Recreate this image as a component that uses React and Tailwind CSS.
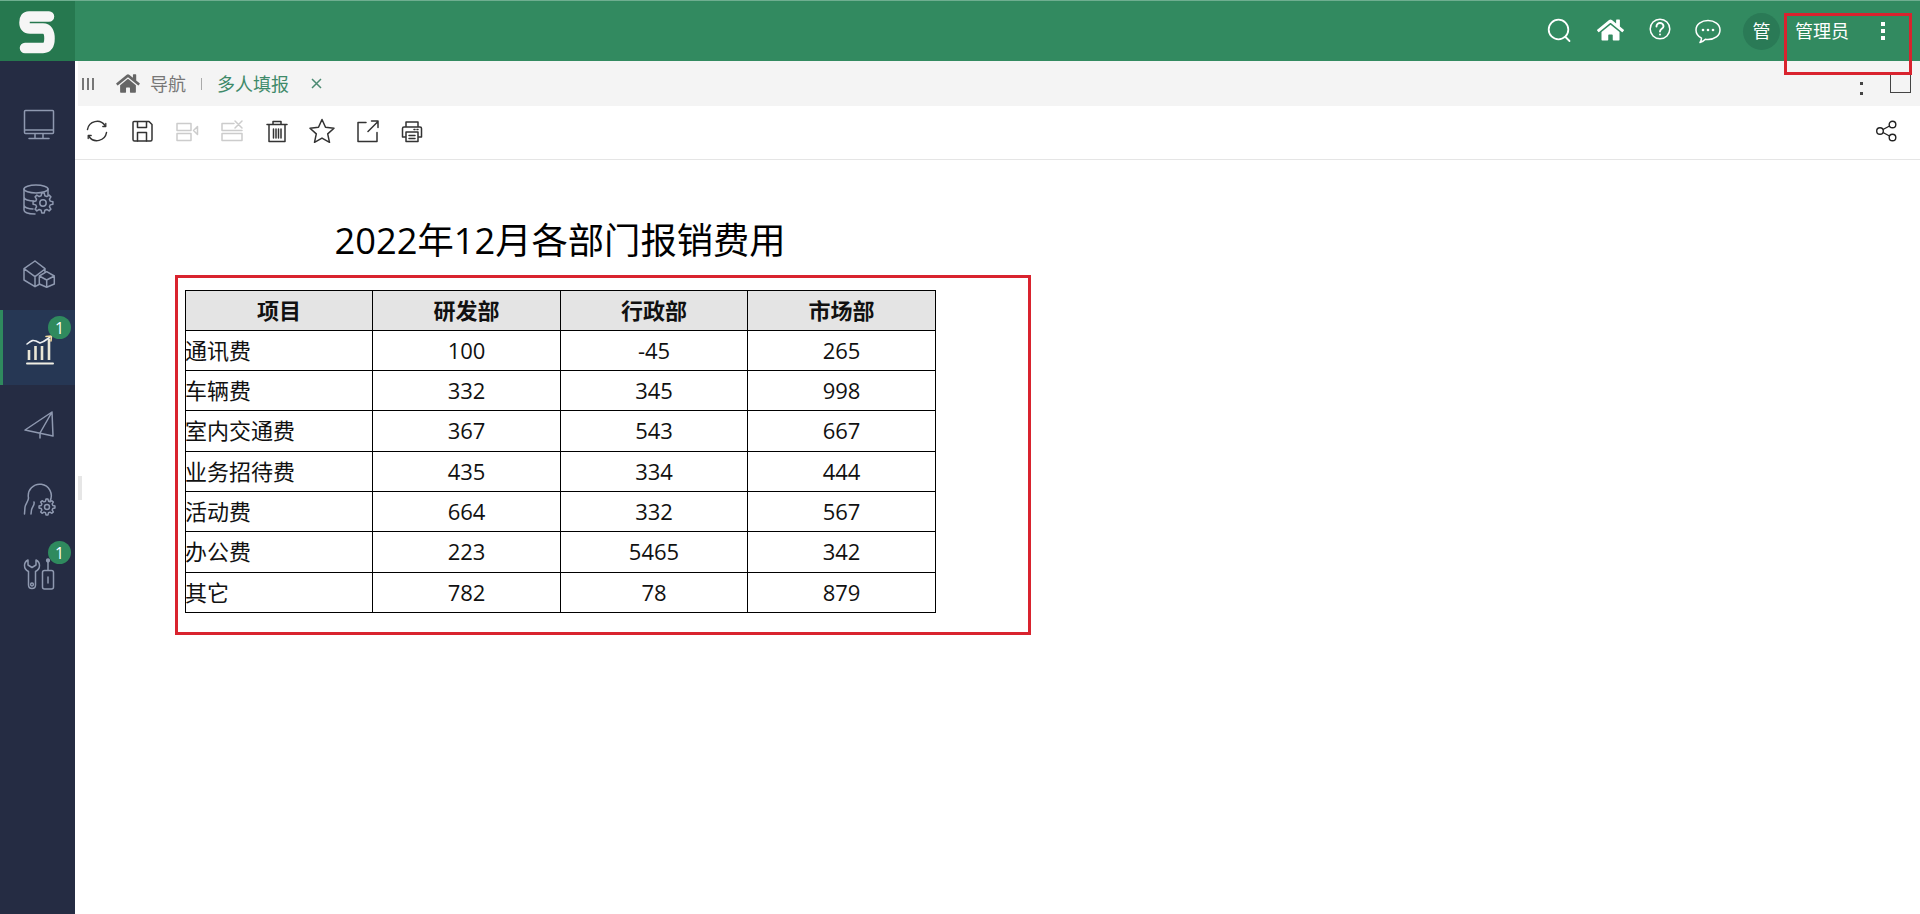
import { FaHome } from "react-icons/fa";

const rows = [
  ["通讯费", "100", "-45", "265", "h-[40px]"],
  ["车辆费", "332", "345", "998", "h-[40px]"],
  ["室内交通费", "367", "543", "667", "h-[41px]"],
  ["业务招待费", "435", "334", "444", "h-[40px]"],
  ["活动费", "664", "332", "567", "h-[40px]"],
  ["办公费", "223", "5465", "342", "h-[41px]"],
  ["其它", "782", "78", "879", "h-[40px]"],
];

// gear outline used by two of the sidebar icons
function gearPath(cx, cy, outer, inner, teeth) {
  let d = "";
  const step = (Math.PI * 2) / teeth;
  for (let i = 0; i < teeth; i++) {
    const a = i * step - Math.PI / 2;
    const pts = [
      [inner, a - step * 0.32],
      [outer, a - step * 0.16],
      [outer, a + step * 0.16],
      [inner, a + step * 0.32],
    ];
    pts.forEach(([r, t], j) => {
      const x = (cx + r * Math.cos(t)).toFixed(2);
      const y = (cy + r * Math.sin(t)).toFixed(2);
      d += `${i === 0 && j === 0 ? "M" : "L"}${x} ${y} `;
    });
  }
  return d + "Z";
}

const side = "#8f99b0";
const bg = "#252c43";

function SideSvg({ children }) {
  return (
    <svg width="41" height="41" viewBox="0 0 41 41" fill="none" stroke={side} strokeWidth="1.500" strokeLinejoin="round" strokeLinecap="round">
      {children}
    </svg>
  );
}

function Monitor() {
  return (
    <SideSvg>
      <rect x="7.500" y="8.500" width="29" height="23" rx="1" />
      <path d="M8 28h28M18 32v4M26 32v4M12 36.500h20" />
    </SideSvg>
  );
}

function DbGear() {
  return (
    <SideSvg>
      <ellipse cx="19" cy="12" rx="12" ry="4" />
      <path d="M7 12v21c0 2.500 5 4 11 4M7 20c0 2.500 5 4 10 4M7 28c0 2.500 5 4 9 4M31 12v6" />
      <path d={gearPath(26, 26, 10, 7.500, 8)} fill={bg} />
      <circle cx="26" cy="26" r="3.200" />
    </SideSvg>
  );
}

function Boxes() {
  return (
    <SideSvg>
      <path d="M18 9L28 16.700V20M18 9L7 16.700V28L18 34.700L22 32.500M7 16.700L18 24.700V34.700M18 24.700L28 17" />
      <path d="M29.700 19.700L37.300 24V32L29.700 35.300L22.300 32V24zM22.300 24L29.700 28L37.300 24M29.700 28V35.300" fill={bg} />
    </SideSvg>
  );
}

function ChartUp() {
  return (
    <svg width="41" height="41" viewBox="0 0 41 41" fill="none" strokeLinecap="round" strokeLinejoin="round">
      <path d="M10 36.500h26" stroke="#f1efe4" strokeWidth="2" />
      <path d="M12 33V23M18.500 33V19M25 33V19M32 33V12" stroke="#e9e6d6" strokeWidth="2.600" strokeLinecap="butt" />
      <path d="M10 17c5-4 6-4 9-3l4 2c4-1 6-3 10-6" stroke="#eef0f2" strokeWidth="1.600" />
      <path d="M29 9.500l5.500-.5-.5 5" stroke="#f2d9a0" strokeWidth="1.600" />
    </svg>
  );
}

function Plane() {
  return (
    <SideSvg>
      <path d="M35 10L8 28l28 6zM35 10L23 31v5" />
    </SideSvg>
  );
}

function PersonGear() {
  return (
    <SideSvg>
      <path d="M33 24A11.500 11.500 0 1 0 11.500 21c0 3-3 6-3.500 9l-.5 7" />
      <path d="M17 25c1 3-2 5-2.500 8l-.5 4" />
      <path d={gearPath(30, 30, 8, 6, 8)} fill={bg} />
      <circle cx="30" cy="30" r="2.500" />
    </SideSvg>
  );
}

function Tools() {
  return (
    <SideSvg>
      <path d="M11 8c-2 1-3.500 3-3.500 5.500 0 3 2 5 4 6V33c0 2 1.500 3.500 3.500 3.500s3.500-1.500 3.500-3.500V19.500c2-1 4-3 4-6C22.500 11 21 9 19 8v5l-4 2.500L11 13z" />
      <circle cx="15" cy="32.500" r="1.400" />
      <path d="M31 9v9M25.500 20.500c0-1 1-2 2-2h7c1 0 2 1 2 2V35c0 1-1 2-2 2h-7c-1 0-2-1-2-2zM31 25v6" />
      <circle cx="31" cy="8.500" r="1.400" fill={side} />
    </SideSvg>
  );
}

const sideItems = [
  { icon: <Monitor /> },
  { icon: <DbGear /> },
  { icon: <Boxes /> },
  { icon: <ChartUp />, active: true, badge: "1" },
  { icon: <Plane /> },
  { icon: <PersonGear /> },
  { icon: <Tools />, badge: "1" },
];

function ToolSvg({ children, color = "#333333" }) {
  return (
    <svg width="24" height="24" viewBox="0 0 24 24" fill="none" stroke={color} strokeWidth="1.500" strokeLinejoin="round" strokeLinecap="round">
      {children}
    </svg>
  );
}

export default function App() {
  return (
    <div className="flex flex-col h-screen bg-white overflow-hidden font-['Open_Sans','Noto_Sans_CJK_SC',sans-serif]">
      {/* TOP BAR */}
      <header className="flex h-[61px] shrink-0 bg-[#328a60] border-t border-[#6fae90]">
        <div className="flex items-center justify-center w-[75px] -mt-px h-[61px] bg-[#26784f] border-t border-[#6fae90]">
          <svg width="75" height="60" viewBox="0 0 75 60" fill="none" className="-mt-px">
            <path d="M49 15.500H29Q24.500 15.500 24.500 21.500Q24.500 27.500 30 27.500H43Q49.500 27.500 49.500 37.500Q49.500 47 43 47H25" stroke="#f6f6f6" strokeWidth="10.500" strokeLinecap="round" strokeLinejoin="round" />
          </svg>
        </div>
        <div className="relative flex flex-1 items-center justify-end pr-[35px] text-white">
          <svg width="24" height="26" viewBox="0 0 24 26" fill="none" stroke="#fff" strokeWidth="1.800" strokeLinecap="round" className="mt-[-2px]">
            <circle cx="11.500" cy="12.500" r="9.800" />
            <path d="M18.500 20l4 4" />
          </svg>
          <FaHome className="w-[27px] h-[24px] ml-[26px] -mt-[2px] text-white" />
          <svg width="22" height="22" viewBox="0 0 22 22" fill="none" stroke="#fff" strokeWidth="1.500" strokeLinecap="round" className="ml-[25px] -mt-[4px]">
            <circle cx="11" cy="11" r="9.800" />
            <path d="M7.500 8.500c0-2.200 1.600-3.500 3.500-3.500s3.500 1.300 3.500 3.200c0 2.600-3.500 2.700-3.500 5.300" strokeWidth="1.900" />
            <circle cx="11" cy="16.500" r="1" fill="#fff" stroke="none" />
          </svg>
          <svg width="26" height="25" viewBox="0 0 26 25" fill="none" stroke="#fff" strokeWidth="1.500" strokeLinejoin="round" className="ml-[24px] mt-[1px]">
            <path d="M13 1.500c6.500 0 12 3.800 12 9.500s-5.500 9.500-12 9.500c-1 0-1.800 0-2.600-.2-1.400 1.500-3 2.600-5.400 3.200 1-1.300 1.500-2.600 1.500-4.300C3.500 17.600 1 14.500 1 11c0-5.700 5.500-9.500 12-9.500z" />
            <circle cx="8" cy="11" r="1.300" fill="#fff" stroke="none" />
            <circle cx="13" cy="11" r="1.300" fill="#fff" stroke="none" />
            <circle cx="18" cy="11" r="1.300" fill="#fff" stroke="none" />
          </svg>
          <div className="flex items-center justify-center w-[37px] h-[37px] ml-[22px] rounded-full bg-[#2a7a56] text-[18px] leading-none">管</div>
          <span className="ml-[15px] w-[54px] text-[18px] leading-none whitespace-nowrap">管理员</span>
          <div className="flex flex-col gap-[3px] ml-[32px] -mt-[1px]">
            <span className="w-[4px] h-[4px] bg-white" />
            <span className="w-[4px] h-[4px] bg-white" />
            <span className="w-[4px] h-[4px] bg-white" />
          </div>
          <div className="absolute right-[8px] top-[12px] w-[128px] h-[62px] border-[3px] border-[#d9232e] z-10" />
        </div>
      </header>

      <div className="flex flex-1 min-h-0">
        {/* SIDEBAR */}
        <aside className="w-[75px] shrink-0 bg-[#252c43] pt-[24px]">
          {sideItems.map((item, i) => (
            <div
              key={i}
              className={`relative flex items-center justify-center h-[75px] ${item.active ? "bg-[#263754] border-l-[3px] border-[#2f8a5e] pr-[3px]" : ""}`}
            >
              {item.icon}
              {item.badge && (
                <span className={`absolute top-[6px] flex items-center justify-center w-[23px] h-[23px] rounded-full bg-[#2f8a5e] text-white text-[16px] leading-none ${item.active ? "left-[45px]" : "left-[48px]"}`}>
                  {item.badge}
                </span>
              )}
            </div>
          ))}
        </aside>

        <main className="relative flex flex-col flex-1 min-w-0">
          <div className="absolute left-[3px] top-[415px] w-[4px] h-[24px] bg-[#e6e6e6]" />

          {/* TAB BAR */}
          <div className="flex items-center h-[45px] ml-[3px] pl-[4px] pr-[9px] bg-[#f4f4f4]">
            <div className="flex gap-[3px]">
              <span className="w-[2px] h-[12px] bg-[#777777]" />
              <span className="w-[2px] h-[12px] bg-[#777777]" />
              <span className="w-[2px] h-[12px] bg-[#777777]" />
            </div>
            <FaHome className="w-[24px] h-[21px] ml-[22px] -mt-[1px] text-[#666666]" />
            <span className="ml-[10px] text-[18px] leading-none text-[#777777]">导航</span>
            <span className="w-px h-[12px] ml-[15px] bg-[#aaaaaa]" />
            <span className="ml-[15px] text-[18px] leading-none text-[#3f8a6a]">多人填报</span>
            <svg width="11" height="11" viewBox="0 0 11 11" stroke="#4b8a72" strokeWidth="1.500" className="ml-[22px]">
              <path d="M1 1l9 9M10 1l-9 9" />
            </svg>
            <div className="flex flex-col gap-[7px] ml-auto -mt-px">
              <span className="w-[3px] h-[3px] bg-[#444444]" />
              <span className="w-[3px] h-[3px] bg-[#444444]" />
              <span className="w-[3px] h-[3px] bg-[#444444]" />
            </div>
            <span className="w-[21px] h-[20px] ml-[27px] -mt-px border border-[#444444]" />
          </div>

          {/* TOOLBAR */}
          <div className="flex items-center gap-[21px] h-[54px] pb-[3px] pl-[10px] pr-[23px] border-b border-[#e5e5e5]">
            <ToolSvg>
              <path d="M2.500 10.500A9.700 9.700 0 0 1 20 6.500M21.500 13.500A9.700 9.700 0 0 1 4 17.500" />
              <path d="M20.800 4.500v3h-3M3.200 19.500v-3h3" strokeWidth="1.300" />
            </ToolSvg>
            <ToolSvg>
              <path d="M4 2.500h15l3 3v15a1.500 1.500 0 0 1-1.500 1.500h-16A1.500 1.500 0 0 1 3 20.500v-17a1 1 0 0 1 1-1z" />
              <path d="M7.500 3v5.500h9V3M7.500 22v-8.500h9V22" />
            </ToolSvg>
            <ToolSvg color="#cccccc">
              <path d="M2 4.500h14v7H2zM2 14.500h14v7H2zM22.500 7.500v8l-4-4z" />
            </ToolSvg>
            <ToolSvg color="#cccccc">
              <path d="M2 4.500h12M2 4.500v7h20M2 14.500h20v7H2zM15 2l7 7M22 2l-7 7" />
            </ToolSvg>
            <ToolSvg>
              <path d="M2 5.500h20M8 5V2.500h8V5M4 6v16.500h16V6M8.500 10v9M11 10v9M13.500 10v9M16 10v9" />
            </ToolSvg>
            <svg width="26" height="26" viewBox="0 0 26 26" fill="none" stroke="#333333" strokeWidth="1.500" strokeLinejoin="round" className="-mx-[1px]">
              <path d="M13 1.500l3.500 7.800 8.500.9-6.300 5.700 1.800 8.400L13 20.100 5.500 24.300l1.800-8.400L1 10.200l8.500-.9z" />
            </svg>
            <ToolSvg>
              <path d="M11 3.500H3v19h19v-9M13 12.500L23 2.500M16.500 2H23v6.500" />
            </ToolSvg>
            <ToolSvg>
              <path d="M6 8V3h12v5M6 18H2.500V9.500c0-1 .7-1.500 1.500-1.500h16c.8 0 1.500.5 1.500 1.500V18H18M6 13h12v9.500H6zM9 16.500h6M9 19.500h6M14 10.500h1M17 10.500h1" />
            </ToolSvg>
            <svg width="22" height="22" viewBox="0 0 22 22" fill="none" stroke="#222222" strokeWidth="1.400" className="ml-auto">
              <circle cx="5" cy="11" r="3.300" />
              <circle cx="17.500" cy="4.500" r="3.300" />
              <circle cx="17.500" cy="17.500" r="3.300" />
              <path d="M8 9.500l6.500-3.500M8 12.500l6.500 3.500" />
            </svg>
          </div>

          {/* REPORT */}
          <div className="flex-1 pl-[110px]">
            <div className="w-[750px] h-[130px] pt-[53px] text-center text-[36.300px] leading-[54px] text-black">
              2022年12月各部门报销费用
            </div>
            <div className="relative w-[751px]">
              <table className="w-[751px] table-fixed border-collapse text-[22px] leading-none text-[#111111]">
                <thead>
                  <tr className="h-[40px] bg-[#e4e4e4]">
                    <th className="w-[187px] p-0 pb-[2px] border border-black font-bold text-center">项目</th>
                    <th className="w-[188px] p-0 pb-[2px] border border-black font-bold text-center">研发部</th>
                    <th className="w-[187px] p-0 pb-[2px] border border-black font-bold text-center">行政部</th>
                    <th className="w-[188px] p-0 pb-[2px] border border-black font-bold text-center">市场部</th>
                  </tr>
                </thead>
                <tbody>
                  {rows.map((row) => (
                    <tr key={row[0]} className={row[4]}>
                      <td className="p-0 pb-[2px] border border-black text-left indent-[-1px]">{row[0]}</td>
                      <td className="p-0 pb-[2px] border border-black text-center">{row[1]}</td>
                      <td className="p-0 pb-[2px] border border-black text-center">{row[2]}</td>
                      <td className="p-0 pb-[2px] border border-black text-center">{row[3]}</td>
                    </tr>
                  ))}
                </tbody>
              </table>
              {/* annotation box drawn over the table */}
              <div className="absolute -left-[10px] -top-[15px] w-[856px] h-[360px] border-[3px] border-[#d9232e]" />
            </div>
          </div>
        </main>
      </div>
    </div>
  );
}
